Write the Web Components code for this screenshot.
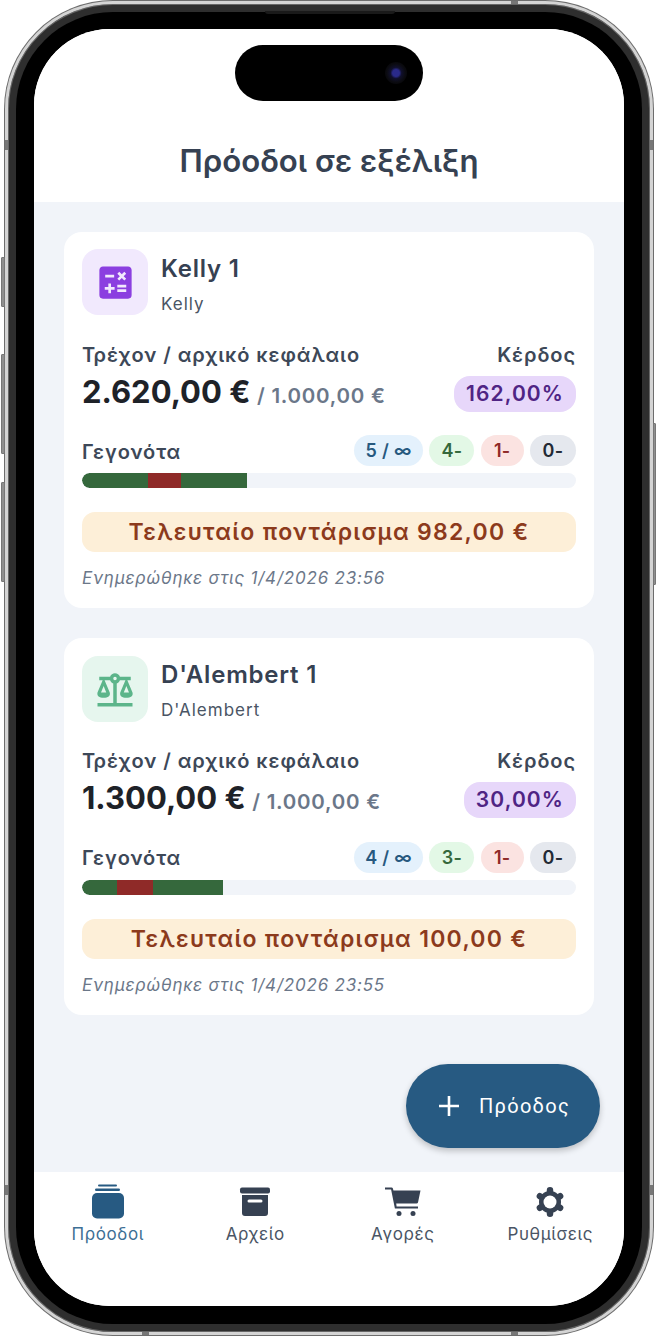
<!DOCTYPE html>
<html lang="el">
<head>
<meta charset="utf-8">
<title>Πρόοδοι</title>
<style>
  html, body { margin: 0; background: #fff; }
  body { font-family: Inter, "Noto Sans", sans-serif; }
</style>
</head>
<body>
<phone-frame>
  <app-header>Πρόοδοι σε εξέλιξη</app-header>
  <main-list>
    <run-card name="Kelly 1" kind="Kelly" icon="calc" current="2.620,00 €" start="/ 1.000,00 €" gain="162,00%"
      total="5 / ∞" won="4-" lost="1-" open="0-" fill="165" red-at="66" red-w="33"
      last="Τελευταίο ποντάρισμα 982,00 €" updated="Ενημερώθηκε στις 1/4/2026 23:56"></run-card>
    <run-card name="D'Alembert 1" kind="D'Alembert" icon="scale" current="1.300,00 €" start="/ 1.000,00 €" gain="30,00%"
      total="4 / ∞" won="3-" lost="1-" open="0-" fill="141" red-at="35" red-w="36"
      last="Τελευταίο ποντάρισμα 100,00 €" updated="Ενημερώθηκε στις 1/4/2026 23:55"></run-card>
    <add-button>Πρόοδος</add-button>
  </main-list>
  <tab-bar>
    <tab-item icon="stack" active>Πρόοδοι</tab-item>
    <tab-item icon="archive">Αρχείο</tab-item>
    <tab-item icon="cart">Αγορές</tab-item>
    <tab-item icon="gear">Ρυθμίσεις</tab-item>
  </tab-bar>
</phone-frame>

<script>
const ICONS = {
  calc: '<svg width="43" height="43" viewBox="0 0 24 24" fill="#8b3fe0"><path d="M19,3H5C3.89,3 3,3.89 3,5V19A2,2 0 0,0 5,21H19A2,2 0 0,0 21,19V5C21,3.89 20.1,3 19,3M13.03,7.06L14.09,6L15.5,7.41L16.91,6L17.97,7.06L16.56,8.47L17.97,9.88L16.91,10.94L15.5,9.54L14.09,10.94L13.03,9.88L14.44,8.47L13.03,7.06M6.25,7.72H11.25V9.22H6.25V7.72M11.5,16H9.5V18H8V16H6V14.5H8V12.5H9.5V14.5H11.5V16M18,17.25H13V15.75H18V17.25M18,14.75H13V13.25H18V14.75Z"/></svg>',
  scale: '<svg width="42" height="42" viewBox="0 0 24 24" fill="#5cb58a"><path d="M12,3C10.73,3 9.6,3.8 9.18,5H3V7H4.95L2,14C1.53,16 3,17 5.5,17C8,17 9.56,16 9,14L6.05,7H9.17C9.5,7.85 10.15,8.5 11,8.83V20H2V22H22V20H13V8.82C13.85,8.5 14.5,7.85 14.82,7H17.95L15,14C14.53,16 16,17 18.5,17C21,17 22.56,16 22,14L19.05,7H21V5H14.83C14.4,3.8 13.27,3 12,3M12,5A1,1 0 0,1 13,6A1,1 0 0,1 12,7A1,1 0 0,1 11,6A1,1 0 0,1 12,5M5.5,10.25L7,14H4L5.5,10.25M18.5,10.25L20,14H17L18.5,10.25Z"/></svg>',
  stack: '<svg width="34" height="36" viewBox="0 0 34 36" fill="currentColor"><rect x="7" y="0.500" width="19" height="2" rx="1"/><rect x="4" y="4.500" width="25" height="2.600" rx="1.300"/><rect x="1" y="9" width="32" height="25.500" rx="5"/></svg>',
  archive: '<svg width="32" height="30" viewBox="0 0 32 30" fill="currentColor"><rect x="1" y="0.500" width="30" height="6" rx="2"/><path fill-rule="evenodd" d="M3 8H29V26a3 3 0 0 1-3 3H6a3 3 0 0 1-3-3ZM10 12.500a1.500 1.500 0 0 0 0 3H22a1.500 1.500 0 0 0 0-3Z"/></svg>',
  cart: '<svg width="36" height="30" viewBox="0 0 36 30" fill="currentColor"><path d="M0 0.500H6.500Q7.600 0.500 7.900 1.600L8.400 3.500H35.500L33 15.500Q32.700 16.500 31.500 16.500H11.200L11.600 19.500H33V21.500H9.900L6.100 2.500H0Z"/><circle cx="14" cy="26.500" r="2.500"/><circle cx="28" cy="26.500" r="2.500"/></svg>',
  gear: '<svg width="30" height="30" viewBox="0 0 30 30"><g stroke="currentColor" stroke-width="6.500" stroke-linecap="round"><path d="M15 15V3.300M15 15V26.700M15 15L25.100 9.200M15 15L25.100 20.800M15 15L4.900 9.200M15 15L4.900 20.800"/></g><circle cx="15" cy="15" r="11" fill="currentColor"/><circle cx="15" cy="15" r="6.500" fill="#fff"/></svg>'
};

class PhoneFrame extends HTMLElement {
  constructor() {
    super();
    this.attachShadow({ mode: 'open' });
    this.shadowRoot.innerHTML = `
      <style>
        :host { display: block; width: 656px; height: 1336px; box-sizing: border-box; padding: 1px 3px 1px 5px; position: relative; overflow: hidden; }
        .ring { height: 100%; box-sizing: border-box; border: 3px solid #d4d4d4; border-radius: 108px; background: #2e2e2e; padding: 8px; box-shadow: 0 0 0 1px #6d6d6d, inset 0 0 0 1px #666; }
        .bezel { height: 100%; box-sizing: border-box; background: #000; border-radius: 97px; padding: 17px 18px 18px; }
        .screen { height: 100%; border-radius: 76px; background: #fff; overflow: hidden; display: flex; flex-direction: column; position: relative; }
        .island { position: absolute; left: 201px; top: 16px; width: 188px; height: 56px; border-radius: 28px; background: #000; z-index: 2; }
        .lens { position: absolute; left: 150px; top: 17px; width: 22px; height: 22px; border-radius: 50%; background: radial-gradient(circle, #2a2a8a 0 22%, #10102c 36%, #0b0b10 60%, #000 100%); }
        .side { position: absolute; left: 1px; width: 4px; background: #8f8f8f; border: 1px solid #777; box-sizing: border-box; border-radius: 1px 0 0 1px; }
        .side.r { left: auto; right: 0; width: 3px; top: 423px; height: 162px; border-radius: 0 1px 1px 0; }
        .notch { position: absolute; left: 265px; top: 11px; width: 130px; height: 3px; background: #1a1a1a; border-radius: 0 0 3px 3px; }
        .seg { position: absolute; background: #777; }
        .seg.v { width: 3px; height: 10px; }
        .seg.h { width: 7px; height: 3px; }
      </style>
      <i class="side" style="top:257px;height:50px"></i>
      <i class="side" style="top:354px;height:100px"></i>
      <i class="side" style="top:482px;height:100px"></i>
      <i class="side r"></i>
      <div class="ring"><div class="bezel"><div class="screen">
        <div class="island"><div class="lens"></div></div>
        <slot></slot>
      </div></div></div>
      <i class="notch"></i>
      <i class="seg v" style="left:5px;top:140px"></i>
      <i class="seg v" style="left:650px;top:140px"></i>
      <i class="seg v" style="left:5px;top:1185px"></i>
      <i class="seg v" style="left:650px;top:1185px"></i>
      <i class="seg h" style="left:511px;top:1px"></i>
      <i class="seg h" style="left:142px;top:1332px"></i>
      <i class="seg h" style="left:511px;top:1332px"></i>`;
  }
}
customElements.define('phone-frame', PhoneFrame);

class AppHeader extends HTMLElement {
  constructor() {
    super();
    this.attachShadow({ mode: 'open' });
    this.shadowRoot.innerHTML = `
      <style>
        :host { display: flex; height: 173px; flex: none; box-sizing: border-box; padding-top: 110px; justify-content: center; background: #fff; color: #364152; font: 600 31.200px/44px Inter, sans-serif; }
      </style>
      <slot></slot>`;
  }
}
customElements.define('app-header', AppHeader);

class MainList extends HTMLElement {
  constructor() {
    super();
    this.attachShadow({ mode: 'open' });
    this.shadowRoot.innerHTML = `
      <style>
        :host { display: flex; flex-direction: column; gap: 30px; flex: 1; min-height: 0; box-sizing: border-box; padding: 29.800px 30px 0; background: #f1f4f9; position: relative; }
      </style>
      <slot></slot>`;
  }
}
customElements.define('main-list', MainList);

class StatPill extends HTMLElement {
  constructor() {
    super();
    this.attachShadow({ mode: 'open' });
    this.shadowRoot.innerHTML = `
      <style>
        :host { display: flex; align-items: center; justify-content: center; box-sizing: border-box; height: 31px; width: var(--w); border-radius: 16px; font: 600 18px/31px Inter, sans-serif; letter-spacing: .3px; background: var(--bg); color: var(--fg); }
      </style>
      <slot></slot>`;
  }
}
customElements.define('stat-pill', StatPill);

class RunCard extends HTMLElement {
  connectedCallback() {
    const a = n => this.getAttribute(n);
    const iconBg = a('icon') === 'calc' ? '#f1e9fd' : '#e6f6ee';
    this.attachShadow({ mode: 'open' });
    this.shadowRoot.innerHTML = `
      <style>
        :host { display: block; box-sizing: border-box; height: 376.600px; padding: 17.400px 18px 0; background: #fff; border-radius: 18px; color: #364152; }
        .top { display: flex; gap: 13px; height: 66px; }
        .icon { width: 66px; height: 66px; border-radius: 16px; background: ${iconBg}; display: flex; align-items: center; justify-content: center; }
        .who { padding-top: 1.600px; }
        .name { font: 600 24px/36px Inter, sans-serif; letter-spacing: .8px; }
        .kind { font: 400 17px/24px Inter, sans-serif; letter-spacing: 1px; margin-top: 5px; color: #4a5565; }
        .money { display: flex; justify-content: space-between; margin-top: 24.600px; }
        .label { font: 600 20px/30px Inter, sans-serif; letter-spacing: .92px; color: #3d4858; }
        .amount { display: flex; align-items: baseline; gap: 6.500px; margin-top: 3px; white-space: nowrap; }
        .cur { font: 700 31px/38px Inter, sans-serif; color: #1e2228; }
        .start { font: 600 20.500px/38px Inter, sans-serif; color: #6b7789; letter-spacing: .75px; }
        .right { display: flex; flex-direction: column; align-items: flex-end; }
        .gain { height: 36px; border-radius: 16px; padding: 0 12px; margin-top: 6px; background: #e7d7fa; color: #4f2484; font: 600 21px/36px Inter, sans-serif; letter-spacing: 1.100px; }
        .events { display: flex; justify-content: space-between; align-items: center; margin-top: 20.400px; height: 31px; }
        .events .label { margin-top: 2px; }
        .pills { display: flex; gap: 6.300px; }
        .bar { height: 15px; margin-top: 7px; background: #f1f4f9; border-radius: 8px; overflow: hidden; }
        .fill { height: 100%; background: #35683c; position: relative; border-radius: 8px 0 0 8px; }
        .red { position: absolute; top: 0; bottom: 0; background: #8f2a28; }
        .last { margin-top: 24px; height: 40px; border-radius: 13px; background: #fdefd8; color: #8c3a1c; text-align: center; font: 600 23px/40px Inter, sans-serif; letter-spacing: 1.270px; white-space: nowrap; }
        .updated { margin-top: 14px; font: italic 400 17px/24px Inter, sans-serif; letter-spacing: .8px; color: #6b7789; }
      </style>
      <div class="top">
        <div class="icon">${ICONS[a('icon')]}</div>
        <div class="who"><div class="name">${a('name')}</div><div class="kind">${a('kind')}</div></div>
      </div>
      <div class="money">
        <div>
          <div class="label">Τρέχον / αρχικό κεφάλαιο</div>
          <div class="amount"><span class="cur">${a('current')}</span><span class="start">${a('start')}</span></div>
        </div>
        <div class="right">
          <div class="label">Κέρδος</div>
          <div class="gain">${a('gain')}</div>
        </div>
      </div>
      <div class="events">
        <div class="label">Γεγονότα</div>
        <div class="pills">
          <stat-pill style="--w:69px;--bg:#e4f1fc;--fg:#27597f">${a('total')}</stat-pill>
          <stat-pill style="--w:45px;--bg:#e3f8e6;--fg:#35683c">${a('won')}</stat-pill>
          <stat-pill style="--w:43px;--bg:#fbe3e1;--fg:#8f2a28">${a('lost')}</stat-pill>
          <stat-pill style="--w:46px;--bg:#e5e8ee;--fg:#232a35">${a('open')}</stat-pill>
        </div>
      </div>
      <div class="bar"><div class="fill" style="width:${a('fill')}px"><div class="red" style="left:${a('red-at')}px;width:${a('red-w')}px"></div></div></div>
      <div class="last">${a('last')}</div>
      <div class="updated">${a('updated')}</div>`;
  }
}
customElements.define('run-card', RunCard);

class AddButton extends HTMLElement {
  constructor() {
    super();
    this.attachShadow({ mode: 'open' });
    this.shadowRoot.innerHTML = `
      <style>
        :host { position: absolute; left: 372px; top: 862px; width: 194px; height: 84px; box-sizing: border-box; border-radius: 42px; background: #275a82; color: #fff; display: flex; align-items: center; gap: 19px; padding-left: 32px; font: 400 20px/24px Roboto, Inter, sans-serif; letter-spacing: 1.300px; box-shadow: 0 3px 6px rgba(0,0,0,.22); }
        svg { display: block; }
      </style>
      <svg width="22" height="22" viewBox="0 0 22 22"><path d="M11 1V21M1 11H21" stroke="#fff" stroke-width="2.600" fill="none"/></svg>
      <slot></slot>`;
  }
}
customElements.define('add-button', AddButton);

class TabBar extends HTMLElement {
  constructor() {
    super();
    this.attachShadow({ mode: 'open' });
    this.shadowRoot.innerHTML = `
      <style>
        :host { display: grid; grid-template-columns: repeat(4, 1fr); height: 134px; flex: none; box-sizing: border-box; padding-top: 11px; background: #fff; }
      </style>
      <slot></slot>`;
  }
}
customElements.define('tab-bar', TabBar);

class TabItem extends HTMLElement {
  connectedCallback() {
    const active = this.hasAttribute('active');
    this.attachShadow({ mode: 'open' });
    this.shadowRoot.innerHTML = `
      <style>
        :host { display: flex; flex-direction: column; align-items: center; color: ${active ? '#275a82' : '#364152'}; }
        .ic { height: 37px; display: flex; align-items: center; justify-content: center; }
        .tx { font: 400 17px/24px Inter, sans-serif; letter-spacing: .6px; margin-top: 2px; color: ${active ? '#3d6f95' : '#4a5565'}; }
      </style>
      <div class="ic">${ICONS[this.getAttribute('icon')]}</div>
      <div class="tx"><slot></slot></div>`;
  }
}
customElements.define('tab-item', TabItem);
</script>
</body>
</html>
